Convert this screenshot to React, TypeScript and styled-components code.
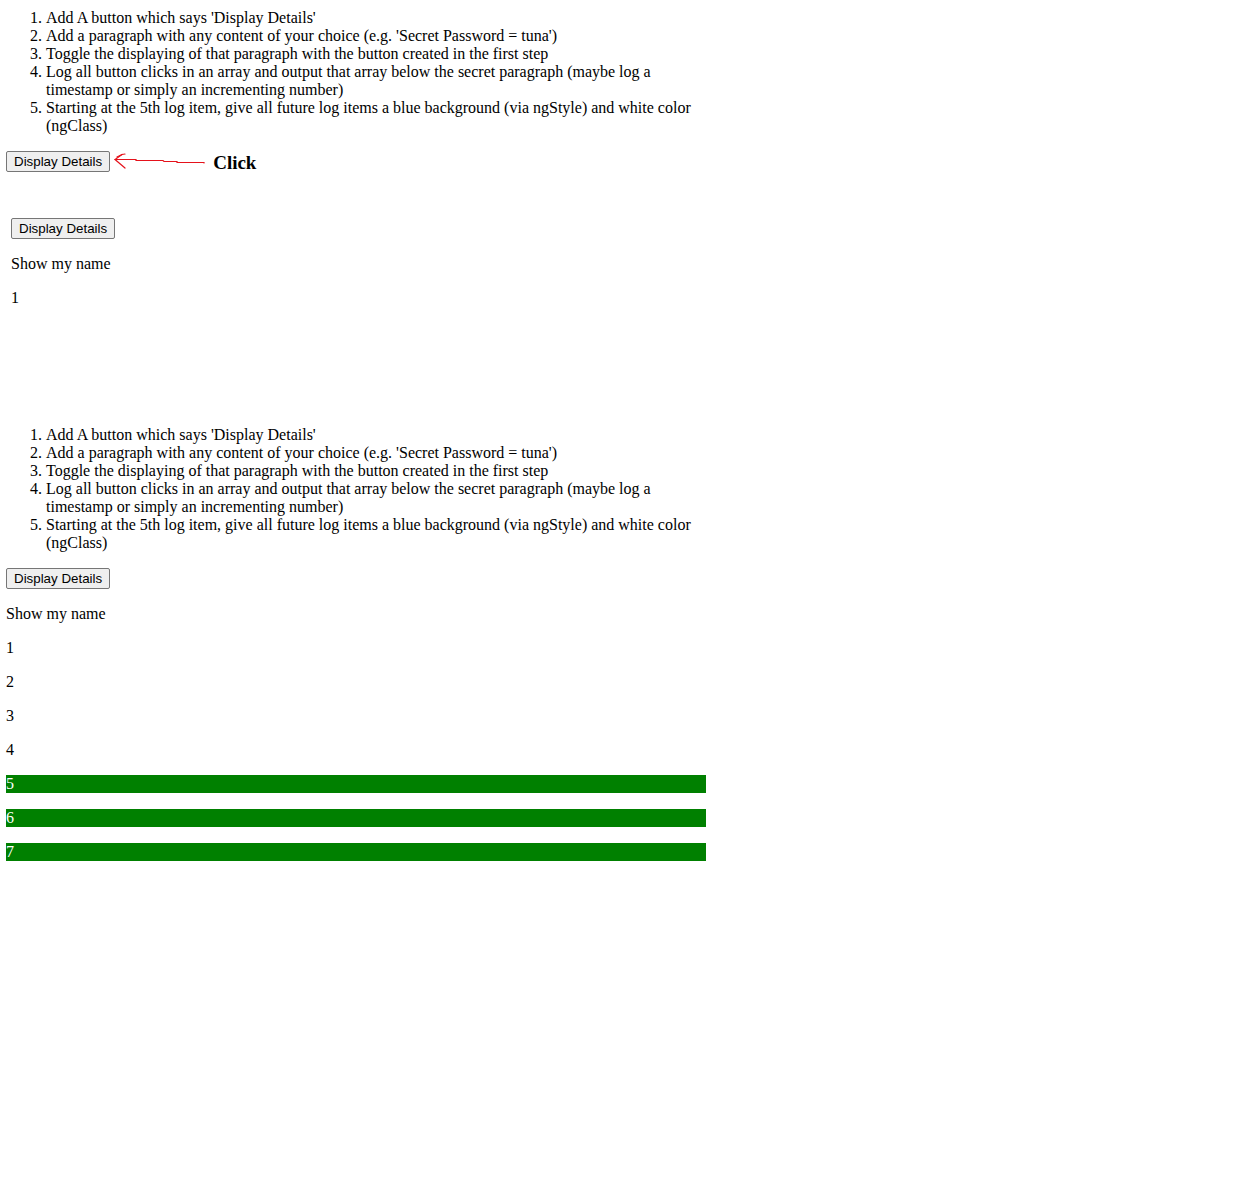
import React from "react";
import styled, { createGlobalStyle } from "styled-components";

const Global = createGlobalStyle`
  html, body { margin: 0; padding: 0; background: #fff; }
  body { font-family: "Liberation Serif", "Times New Roman", serif; font-size: 16px; line-height: 18px; color: #000; }
`;

const Page = styled.div`
  width: 700px;
  padding: 9px 0 0 6px;
`;

const Section = styled.section<{ $indent?: number; $top?: number }>`
  margin-left: ${(p) => p.$indent ?? 0}px;
  margin-top: ${(p) => p.$top ?? 0}px;
`;

const Steps = styled.ol`
  margin: 0 0 16px 0;
  padding-left: 40px;
  li { line-height: 18px; }
`;

const Btn = styled.button`
  font-family: "Liberation Sans", Arial, sans-serif;
  font-size: 13.333px;
  line-height: 15px;
  height: 21px;
  padding: 1px 7px;
  background: #efefef;
  color: #000;
  border: 1px solid #767676;
  border-radius: 2px;
  margin: 0;
  display: block;
`;

const ClickRow = styled.div`
  display: flex;
  align-items: center;
  height: 21px;
`;

const ClickLabel = styled.span`
  font-weight: bold;
  font-size: 19px;
  margin-left: 5px;
  margin-top: 3px;
`;

const Para = styled.p`
  margin: 16px 0 0 0;
  line-height: 18px;
`;

const LogItem = styled.p<{ $hi: boolean }>`
  margin: 16px 0 0 0;
  line-height: 18px;
  height: 18px;
  background: ${(p) => (p.$hi ? "#008000" : "transparent")};
  color: ${(p) => (p.$hi ? "#fff" : "#000")};
`;

const StepList = () => (
  <Steps>
    <li>Add A button which says 'Display Details'</li>
    <li>Add a paragraph with any content of your choice (e.g. 'Secret Password = tuna')</li>
    <li>Toggle the displaying of that paragraph with the button created in the first step</li>
    <li>Log all button clicks in an array and output that array below the secret paragraph (maybe log a timestamp or simply an incrementing number)</li>
    <li>Starting at the 5th log item, give all future log items a blue background (via ngStyle) and white color (ngClass)</li>
  </Steps>
);

const Arrow = () => (
  <svg width="96" height="21" viewBox="0 0 96 21" style={{ marginLeft: 2 }}>
    <g fill="none" stroke="#e5121b" strokeWidth="1.2" strokeLinecap="round">
      <path d="M5 6 L10 3.5" />
      <path d="M13 3 L10 3.5 L3 8.5 L13 17" />
      <path d="M3 8.5 L24 8.5 L24 9.5 L51 9.5 L52 10.5 L65 10.5 L65 11.5 L92 11.5 L92 12" />
    </g>
  </svg>
);

export default function App() {
  const logs = [1, 2, 3, 4, 5, 6, 7];
  return (
    <>
      <Global />
      <Page>
        <Section>
          <StepList />
          <ClickRow>
            <Btn>Display Details</Btn>
            <Arrow />
            <ClickLabel>Click</ClickLabel>
          </ClickRow>
        </Section>
        <Section $indent={5} $top={46}>
          <Btn>Display Details</Btn>
          <Para>Show my name</Para>
          <LogItem $hi={false}>1</LogItem>
        </Section>
        <Section $top={119}>
          <StepList />
          <Btn>Display Details</Btn>
          <Para>Show my name</Para>
          {logs.map((n) => (
            <LogItem key={n} $hi={n >= 5}>
              {n}
            </LogItem>
          ))}
        </Section>
      </Page>
    </>
  );
}
